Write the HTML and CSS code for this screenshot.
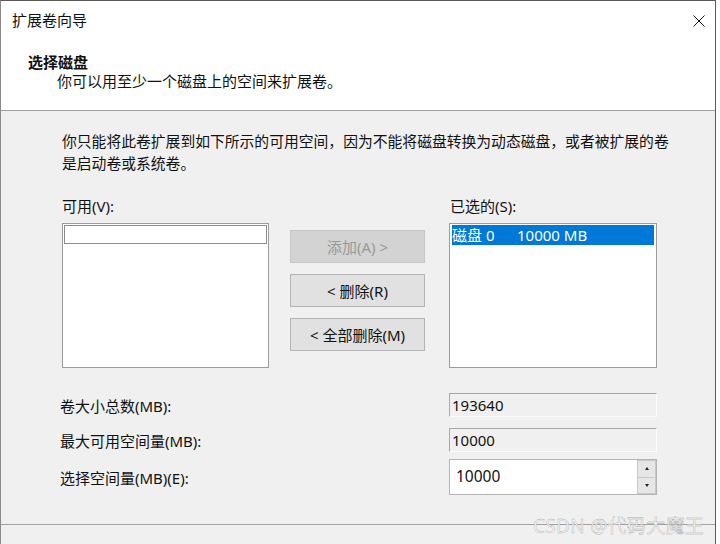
FILE: index.html
```html
<!DOCTYPE html>
<html lang="zh-CN">
<head>
<meta charset="utf-8">
<title>扩展卷向导</title>
<link rel="stylesheet" href="styles.css">
</head>
<body>
<div class="window">
  <header class="head">
    <div class="titlebar">
      <span class="title">扩展卷向导</span>
      <svg class="close" width="12" height="12" viewBox="0 0 12 12" aria-hidden="true">
        <path d="M0.5 0.5 L11.5 11.5 M11.5 0.5 L0.5 11.5" stroke="#111" stroke-width="1" fill="none"/>
      </svg>
    </div>
    <div class="head-text">
      <div class="h-title">选择磁盘</div>
      <div class="h-sub">你可以用至少一个磁盘上的空间来扩展卷。</div>
    </div>
  </header>

  <main class="content">
    <p class="intro">你只能将此卷扩展到如下所示的可用空间，因为不能将磁盘转换为动态磁盘，或者被扩展的卷是启动卷或系统卷。</p>

    <div class="pickers">
      <div class="col col-left">
        <div class="lbl">可用(V):</div>
        <div class="listbox">
          <div class="focus-item"></div>
        </div>
      </div>
      <div class="btns">
        <button class="btn btn-disabled" type="button">添加(A) &gt;</button>
        <button class="btn" type="button">&lt; 删除(R)</button>
        <button class="btn" type="button">&lt; 全部删除(M)</button>
      </div>
      <div class="col col-right">
        <div class="lbl lbl-right">已选的(S):</div>
        <div class="listbox">
          <div class="sel-item"><span class="disk">磁盘 0</span><span>10000 MB</span></div>
        </div>
      </div>
    </div>

    <div class="form">
      <div class="row row-1">
        <span class="row-label">卷大小总数(MB):</span>
        <div class="field">193640</div>
      </div>
      <div class="row row-2">
        <span class="row-label">最大可用空间量(MB):</span>
        <div class="field">10000</div>
      </div>
      <div class="row row-3">
        <span class="row-label">选择空间量(MB)(E):</span>
        <div class="spin">
          <span class="spin-value">10000</span>
          <div class="spin-btns">
            <span class="spin-btn"><span class="arr-up"></span></span>
            <span class="spin-btn"><span class="arr-down"></span></span>
          </div>
        </div>
      </div>
    </div>
  </main>

  <footer class="foot"></footer>

  <div class="watermark">CSDN @代码大魔王</div>
</div>
</body>
</html>
```

FILE: styles.css
```css
* {
  box-sizing: border-box;
}

html, body {
  margin: 0;
  padding: 0;
  background: #ffffff;
}

body {
  font-family: "Noto Sans", "Noto Sans CJK SC", sans-serif;
  font-size: 15px;
  color: #111;
}

.window {
  position: relative;
  width: 716px;
  height: 544px;
  border-top: 1px solid #5a5a5a;
  border-left: 1px solid #8a8a8a;
  border-right: 1px solid #5a5a5a;
  background: #f0f0f0;
  overflow: hidden;
}

.head {
  height: 110px;
  background: #ffffff;
  border-bottom: 1px solid #a0a0a0;
}

.titlebar {
  height: 39px;
  display: flex;
  justify-content: space-between;
  align-items: flex-start;
  padding: 9px 10px 0 11px;
}

.title {
  line-height: 20px;
}

.close {
  display: block;
  margin-top: 5px;
}

.head-text {
  margin-top: 13px;
  padding-left: 27px;
}

.h-title {
  font-weight: 700;
  line-height: 19px;
}

.h-sub {
  line-height: 19px;
  padding-left: 29px;
}

.content {
  height: 413px;
  padding: 19px 0 0 61px;
}

.intro {
  margin: 0;
  max-width: 620px;
  font-size: 14.8px;
  line-height: 22px;
}

.pickers {
  display: flex;
  margin-top: 22px;
}

.col-left {
  width: 207px;
}

.col-right {
  width: 208px;
  margin-left: 24px;
}

.lbl {
  line-height: 20px;
  height: 20px;
}

.lbl-right {
  padding-left: 1px;
}

.listbox {
  margin-top: 7px;
  height: 145px;
  background: #ffffff;
  border: 1px solid #9c9c9c;
  padding: 1px;
}

.focus-item {
  height: 19px;
  border: 1px solid #8c8c8c;
}

.sel-item {
  display: flex;
  height: 20px;
  margin: 0 1px;
  align-items: center;
  background: #0078d7;
  color: #ffffff;
  line-height: 20px;
}

.disk {
  width: 65px;
}

.btns {
  width: 135px;
  margin-left: 21px;
  padding-top: 34px;
  display: flex;
  flex-direction: column;
  gap: 11px;
}

.btn {
  height: 33px;
  margin: 0;
  padding: 0;
  font: inherit;
  color: #111;
  background: #e1e1e1;
  border: 1px solid #b4b4b4;
  border-radius: 0;
}

.btn-disabled {
  background: #d3d3d3;
  border-color: #c6c6c6;
  color: #999999;
}

.form {
  margin-top: 25px;
}

.row {
  display: flex;
  align-items: center;
}

.row-1 {
  height: 24px;
}

.row-2 {
  height: 24px;
  margin-top: 11px;
}

.row-3 {
  height: 36px;
  margin-top: 7px;
}

.row-label {
  width: 389px;
  margin-left: -2px;
}

.field {
  width: 208px;
  height: 24px;
  line-height: 22px;
  padding-left: 2px;
  background: #f0f0f0;
  border-top: 1px solid #a8a8a8;
  border-left: 1px solid #a8a8a8;
  border-right: 1px solid #fbfbfb;
  border-bottom: 1px solid #fbfbfb;
}

.spin {
  width: 208px;
  height: 36px;
  display: flex;
  background: #ffffff;
  border: 1px solid #b4b4b4;
}

.spin-value {
  flex: 1;
  padding-left: 6px;
  line-height: 32px;
  font-size: 15.5px;
}

.spin-btns {
  width: 19px;
  display: flex;
  flex-direction: column;
}

.spin-btn {
  flex: 1;
  display: flex;
  align-items: center;
  justify-content: center;
  background: #e6e6e6;
  border: 1px solid #c9c9c9;
}

.spin-btn + .spin-btn {
  border-top: none;
}

.arr-up {
  width: 0;
  height: 0;
  border-left: 2px solid transparent;
  border-right: 2px solid transparent;
  border-bottom: 3px solid #222;
}

.arr-down {
  width: 0;
  height: 0;
  border-left: 2px solid transparent;
  border-right: 2px solid transparent;
  border-top: 3px solid #222;
}

.foot {
  height: 40px;
  border-top: 1px solid #a0a0a0;
  background: #f0f0f0;
}

.watermark {
  position: absolute;
  left: 532px;
  top: 512px;
  font-size: 19px;
  line-height: 26px;
  color: rgba(246, 246, 246, 0.9);
  -webkit-text-stroke: 0.35px #a8a8a8;
  letter-spacing: 0.3px;
}
```
